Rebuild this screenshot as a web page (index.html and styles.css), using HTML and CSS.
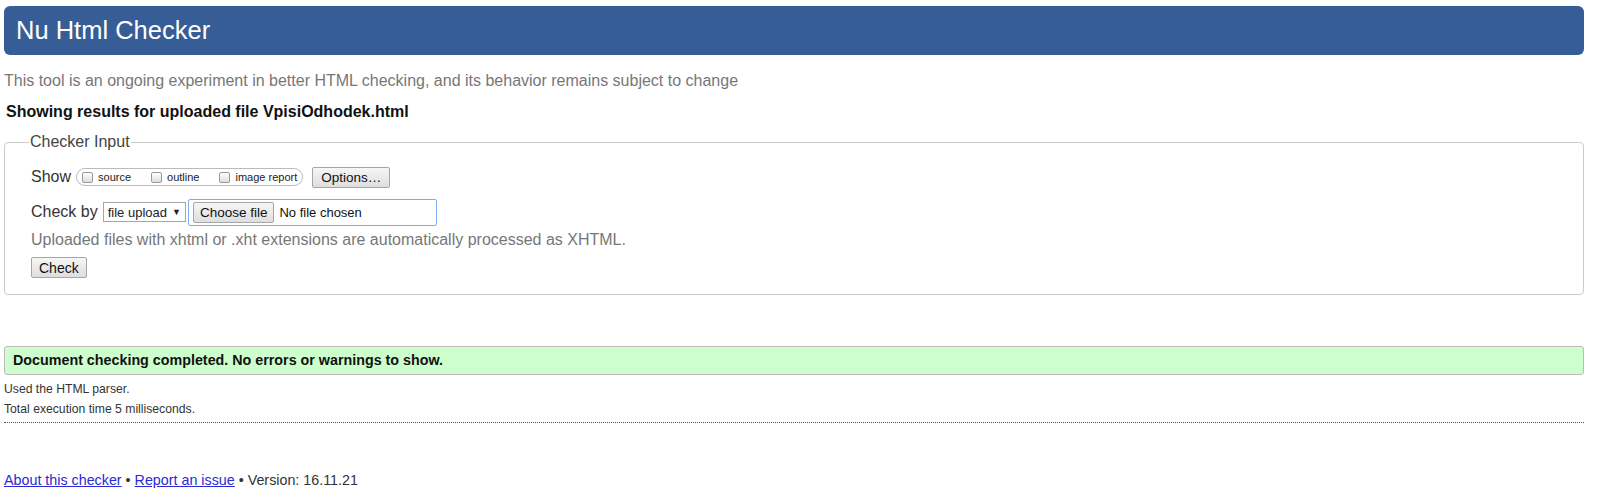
FILE: index.html
```html
<!DOCTYPE html>
<html>
<head>
<meta charset="utf-8">
<title>Showing results for uploaded file VpisiOdhodek.html - Nu Html Checker</title>
<link rel="stylesheet" href="styles.css">
</head>
<body>
<div class="page">
  <h1 class="title">Nu Html Checker</h1>
  <p class="tagline">This tool is an ongoing experiment in better HTML checking, and its behavior remains subject to change</p>
  <p class="showing">Showing results for uploaded file VpisiOdhodek.html</p>
  <fieldset class="input">
    <legend class="legend">Checker Input</legend>
    <div class="row">
      <span class="lbl">Show</span>
      <span class="pill">
        <label class="opt"><span class="cb"></span>source</label>
        <label class="opt"><span class="cb"></span>outline</label>
        <label class="opt"><span class="cb"></span>image report</label>
      </span>
      <span class="btn options">Options…</span>
    </div>
    <div class="row row2">
      <span class="lbl">Check by</span>
      <span class="select">file upload <span class="arrow">▼</span></span>
      <span class="file"><span class="btn choose">Choose file</span><span class="nofile">No file chosen</span></span>
    </div>
    <p class="hint">Uploaded files with xhtml or .xht extensions are automatically processed as XHTML.</p>
    <span class="btn check">Check</span>
  </fieldset>
  <div class="success">Document checking completed. No errors or warnings to show.</div>
  <p class="details">Used the HTML parser.</p>
  <p class="details">Total execution time 5 milliseconds.</p>
  <hr class="sep">
  <p class="footer"><a href="#">About this checker</a> • <a href="#">Report an issue</a> • Version: 16.11.21</p>
</div>
</body>
</html>
```
FILE: styles.css
```css
html, body { margin: 0; padding: 0; background: #fff; }
body { font-family: "Liberation Sans", Arial, sans-serif; color: #222; }
.page { width: 1580px; margin-left: 4px; padding-top: 6px; }
.title {
  margin: 0; height: 49px; box-sizing: border-box;
  background: #365d95; color: #fff; border-radius: 6px;
  font-weight: normal; font-size: 25.5px; line-height: 48px;
  padding: 0 12px;
}
.tagline { margin: 16px 0 0; font-size: 16px; line-height: 20px; color: #777; }
.showing { margin: 11px 0 0 2px; font-size: 16px; line-height: 20px; font-weight: bold; color: #111; }
.input {
  margin: 11px 0 0; padding: 14px 26px 16px; border: 1px solid #ccc; border-radius: 4px;
  min-width: 0;
}
.legend { padding: 0 1px; font-size: 16px; color: #444; margin-left: -2px; }
.row { display: flex; align-items: center; height: 24px; }
.row2 { margin-top: 9px; height: 28px; }
.lbl { font-size: 16px; color: #333; margin-right: 5px; }
.pill {
  display: inline-flex; align-items: center; gap: 0; height: 16px;
  border: 1px solid #bbb; border-radius: 9px; padding: 0 5px 0 5px; margin-left: 0;
}
.opt { display: inline-flex; align-items: center; font-size: 11px; color: #222; margin-right: 20px; }
.opt:last-child { margin-right: 0; }
.cb {
  display: inline-block; width: 11px; height: 11px; border: 1px solid #999; border-radius: 2px;
  background: linear-gradient(#fff, #ddd); margin-right: 5px; box-sizing: border-box;
}
.btn {
  display: inline-flex; align-items: center; justify-content: center;
  border: 1px solid #a6a6a6; border-radius: 2px; background: linear-gradient(#f6f6f6, #dedede);
  font-size: 13px; color: #111; box-sizing: border-box;
}
.options { height: 21px; padding: 0 8px; margin-left: 9px; font-size: 13.5px; }
.select {
  display: inline-flex; align-items: center; height: 20px; box-sizing: border-box;
  border: 1px solid #a6a6a6; font-size: 13px; padding: 0 4px; margin-right: 2px;
}
.arrow { font-size: 9px; margin-left: 5px; }
.file {
  display: inline-flex; align-items: center; height: 27px; width: 249px; box-sizing: border-box;
  border: 1px solid #7eaef0; border-radius: 2px; padding-left: 4px;
}
.choose { height: 21px; padding: 0 6px; font-size: 13.5px; }
.nofile { font-size: 13px; color: #111; margin-left: 5px; }
.hint { margin: 4px 0 0; font-size: 16px; line-height: 20px; color: #777; }
.check { height: 21px; padding: 0 7px; margin-top: 7px; font-size: 14px; }
.success {
  margin-top: 51px; height: 29px; box-sizing: border-box;
  background: #ccffcc; border: 1px solid #bbb; border-radius: 3px;
  font-size: 14.3px; font-weight: bold; line-height: 27px; padding-left: 8px; color: #111;
}
.details { margin: 7px 0 0; font-size: 12.2px; line-height: 14px; color: #333; }
.details + .details { margin-top: 6px; }
.sep { margin: 6px 0 0; border: 0; border-top: 1px dotted #555; }
.footer { margin: 49px 0 0; font-size: 14.3px; color: #333; }
.footer a { color: #2a2ad6; }
```
